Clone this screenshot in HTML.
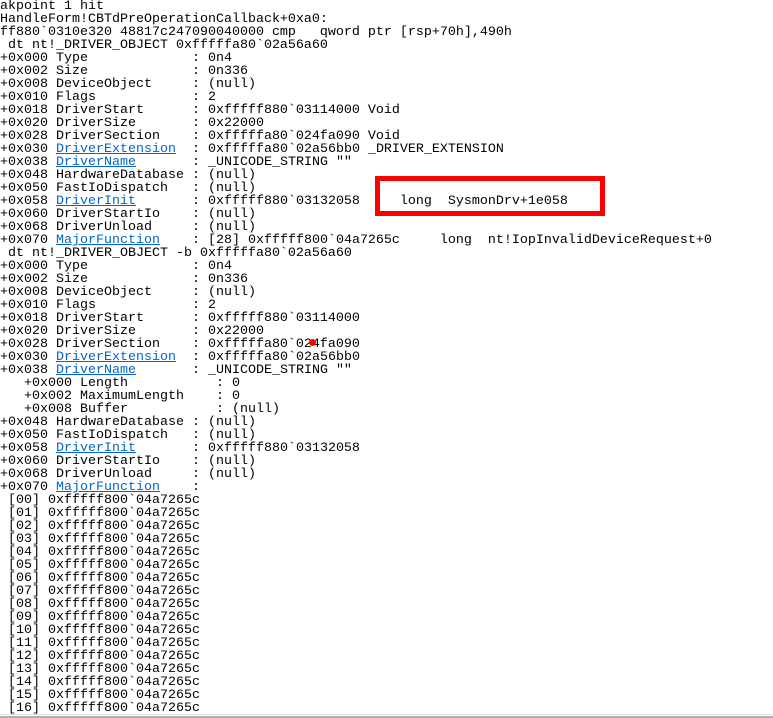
<!DOCTYPE html>
<html><head><meta charset="utf-8"><style>
html,body{margin:0;padding:0;background:#fff;width:773px;height:718px;overflow:hidden;position:relative}
pre{margin:0;font-family:"Liberation Mono",monospace;font-size:13.33px;line-height:13px;color:#000;position:absolute;left:0;top:0;white-space:pre}
a{color:#0066cc;text-decoration:underline}
.box{position:absolute;left:375px;top:176px;width:220px;height:30px;border:5px solid #f00}
.dot{position:absolute;left:309px;top:339px;width:7px;height:7px;border-radius:50%;background:#f00}
.b1{position:absolute;left:0;top:714px;width:773px;height:1px;background:#ddd}
.b2{position:absolute;left:0;top:716px;width:773px;height:2px;background:#b0b0b0}
</style></head><body>
<pre>akpoint 1 hit
HandleForm!CBTdPreOperationCallback+0xa0:
ff880`0310e320 48817c247090040000 cmp   qword ptr [rsp+70h],490h
 dt nt!_DRIVER_OBJECT 0xfffffa80`02a56a60
+0x000 Type             : 0n4
+0x002 Size             : 0n336
+0x008 DeviceObject     : (null)
+0x010 Flags            : 2
+0x018 DriverStart      : 0xfffff880`03114000 Void
+0x020 DriverSize       : 0x22000
+0x028 DriverSection    : 0xfffffa80`024fa090 Void
+0x030 <a>DriverExtension</a>  : 0xfffffa80`02a56bb0 _DRIVER_EXTENSION
+0x038 <a>DriverName</a>       : _UNICODE_STRING ""
+0x048 HardwareDatabase : (null)
+0x050 FastIoDispatch   : (null)
+0x058 <a>DriverInit</a>       : 0xfffff880`03132058     long  SysmonDrv+1e058
+0x060 DriverStartIo    : (null)
+0x068 DriverUnload     : (null)
+0x070 <a>MajorFunction</a>    : [28] 0xfffff800`04a7265c     long  nt!IopInvalidDeviceRequest+0
 dt nt!_DRIVER_OBJECT -b 0xfffffa80`02a56a60
+0x000 Type             : 0n4
+0x002 Size             : 0n336
+0x008 DeviceObject     : (null)
+0x010 Flags            : 2
+0x018 DriverStart      : 0xfffff880`03114000
+0x020 DriverSize       : 0x22000
+0x028 DriverSection    : 0xfffffa80`024fa090
+0x030 <a>DriverExtension</a>  : 0xfffffa80`02a56bb0
+0x038 <a>DriverName</a>       : _UNICODE_STRING ""
   +0x000 Length           : 0
   +0x002 MaximumLength    : 0
   +0x008 Buffer           : (null)
+0x048 HardwareDatabase : (null)
+0x050 FastIoDispatch   : (null)
+0x058 <a>DriverInit</a>       : 0xfffff880`03132058
+0x060 DriverStartIo    : (null)
+0x068 DriverUnload     : (null)
+0x070 <a>MajorFunction</a>    :
 [00] 0xfffff800`04a7265c
 [01] 0xfffff800`04a7265c
 [02] 0xfffff800`04a7265c
 [03] 0xfffff800`04a7265c
 [04] 0xfffff800`04a7265c
 [05] 0xfffff800`04a7265c
 [06] 0xfffff800`04a7265c
 [07] 0xfffff800`04a7265c
 [08] 0xfffff800`04a7265c
 [09] 0xfffff800`04a7265c
 [10] 0xfffff800`04a7265c
 [11] 0xfffff800`04a7265c
 [12] 0xfffff800`04a7265c
 [13] 0xfffff800`04a7265c
 [14] 0xfffff800`04a7265c
 [15] 0xfffff800`04a7265c
 [16] 0xfffff800`04a7265c</pre>
<div class="box"></div>
<div class="dot"></div>
<div class="b1"></div>
<div class="b2"></div>
</body></html>
